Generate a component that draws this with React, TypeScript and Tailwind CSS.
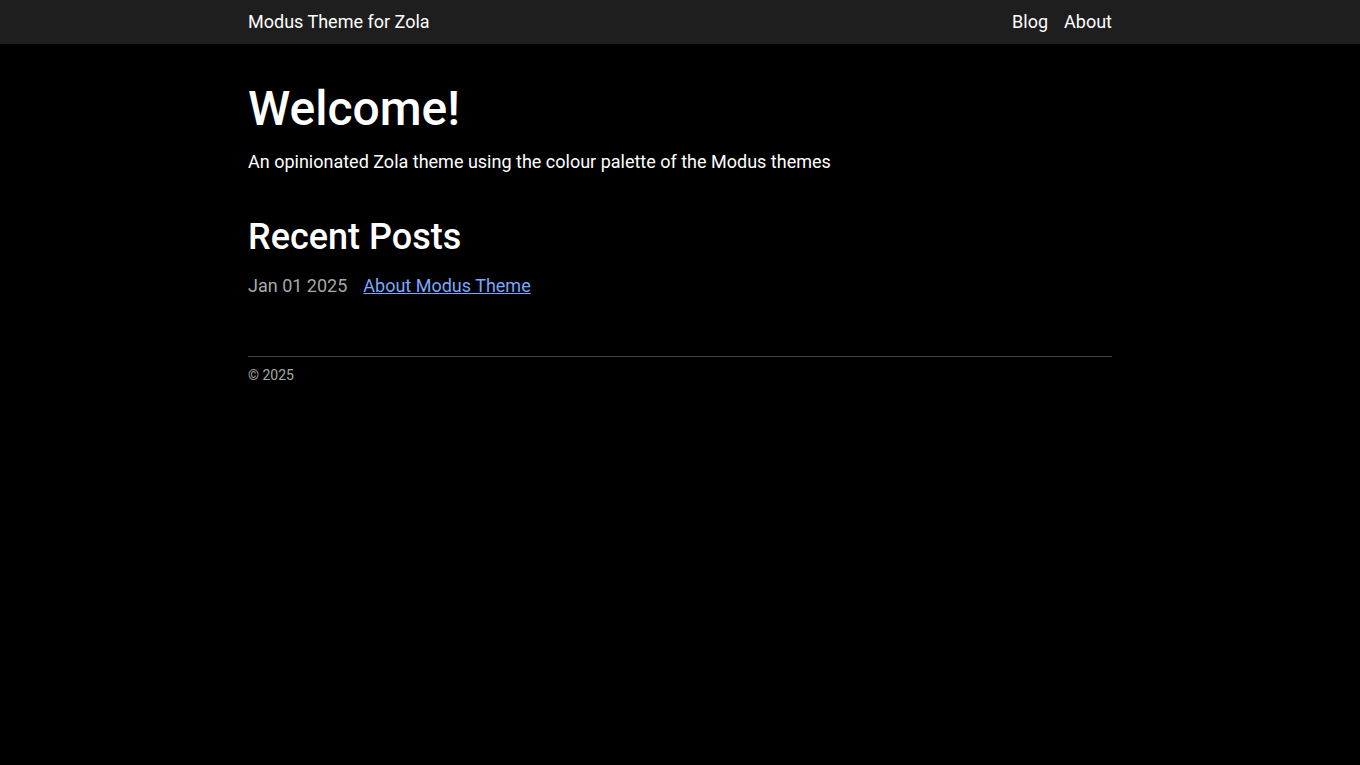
const posts = [{ date: "Jan 01 2025", title: "About Modus Theme" }];

export default function App() {
  return (
    <div className="min-h-screen bg-black text-white" style={{ fontFamily: "Roboto, sans-serif" }}>
      <header className="bg-[#1e1e1e]">
        <nav className="mx-auto flex h-11 w-[864px] items-center justify-between text-lg">
          <a href="#">Modus Theme for Zola</a>
          <div className="flex gap-4">
            <a href="#">Blog</a>
            <a href="#">About</a>
          </div>
        </nav>
      </header>
      <main className="mx-auto w-[864px] pt-9">
        <h1 className="text-5xl font-medium leading-[1.2]">Welcome!</h1>
        <p className="mt-[10px] text-lg">An opinionated Zola theme using the colour palette of the Modus themes</p>
        <h2 className="mt-10 text-4xl font-medium leading-[1.2]">Recent Posts</h2>
        <ul className="mt-[13px] text-lg">
          {posts.map((p) => (
            <li key={p.title} className="flex gap-4">
              <span className="text-[#a8a8a8]">{p.date}</span>
              <a href="#" className="text-[#79a8ff] underline">{p.title}</a>
            </li>
          ))}
        </ul>
      </main>
      <footer className="mx-auto mt-14 w-[864px] border-t border-[#444] pt-2 text-sm text-[#a8a8a8]">
        © 2025
      </footer>
    </div>
  );
}
